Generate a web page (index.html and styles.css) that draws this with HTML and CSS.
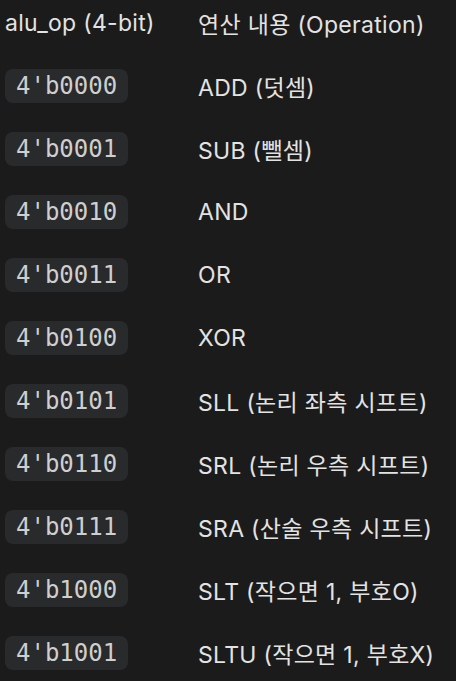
FILE: index.html
```html
<!DOCTYPE html>
<html>
<head>
<meta charset="utf-8">
<link rel="stylesheet" href="styles.css">
</head>
<body>
<div class="table">
  <div class="row head"><div class="c1">alu_op (4-bit)</div><div class="c2">연산 내용 (Operation)</div></div>
  <div class="row"><div class="c1"><code>4'b0000</code></div><div class="c2">ADD (덧셈)</div></div>
  <div class="row"><div class="c1"><code>4'b0001</code></div><div class="c2">SUB (뺄셈)</div></div>
  <div class="row"><div class="c1"><code>4'b0010</code></div><div class="c2">AND</div></div>
  <div class="row"><div class="c1"><code>4'b0011</code></div><div class="c2">OR</div></div>
  <div class="row"><div class="c1"><code>4'b0100</code></div><div class="c2">XOR</div></div>
  <div class="row"><div class="c1"><code>4'b0101</code></div><div class="c2">SLL (논리 좌측 시프트)</div></div>
  <div class="row"><div class="c1"><code>4'b0110</code></div><div class="c2">SRL (논리 우측 시프트)</div></div>
  <div class="row"><div class="c1"><code>4'b0111</code></div><div class="c2">SRA (산술 우측 시프트)</div></div>
  <div class="row"><div class="c1"><code>4'b1000</code></div><div class="c2">SLT (작으면 1, 부호O)</div></div>
  <div class="row"><div class="c1"><code>4'b1001</code></div><div class="c2">SLTU (작으면 1, 부호X)</div></div>
</div>
</body>
</html>
```
FILE: styles.css
```css
html, body {
  margin: 0;
  padding: 0;
  background: #1b1b1b;
}
body {
  color: #e3e3e3;
  font-family: Inter, "Noto Sans CJK KR", sans-serif;
  font-size: 23px;
  letter-spacing: 0.3px;
}
.table {
  display: flex;
  flex-direction: column;
  padding-left: 5px;
}
.row {
  display: grid;
  grid-template-columns: 193px 1fr;
  align-items: center;
  height: 63px;
  white-space: nowrap;
}
.row.head {
  height: 46px;
  margin-bottom: 8px;
}
code {
  display: inline-block;
  font-family: "DejaVu Sans Mono", monospace;
  font-size: 24px;
  letter-spacing: 0;
  line-height: 34px;
  height: 34px;
  padding: 0 11px;
  background: #282a2c;
  border-radius: 8px;
  color: #cfcfcf;
  vertical-align: middle;
}
```
